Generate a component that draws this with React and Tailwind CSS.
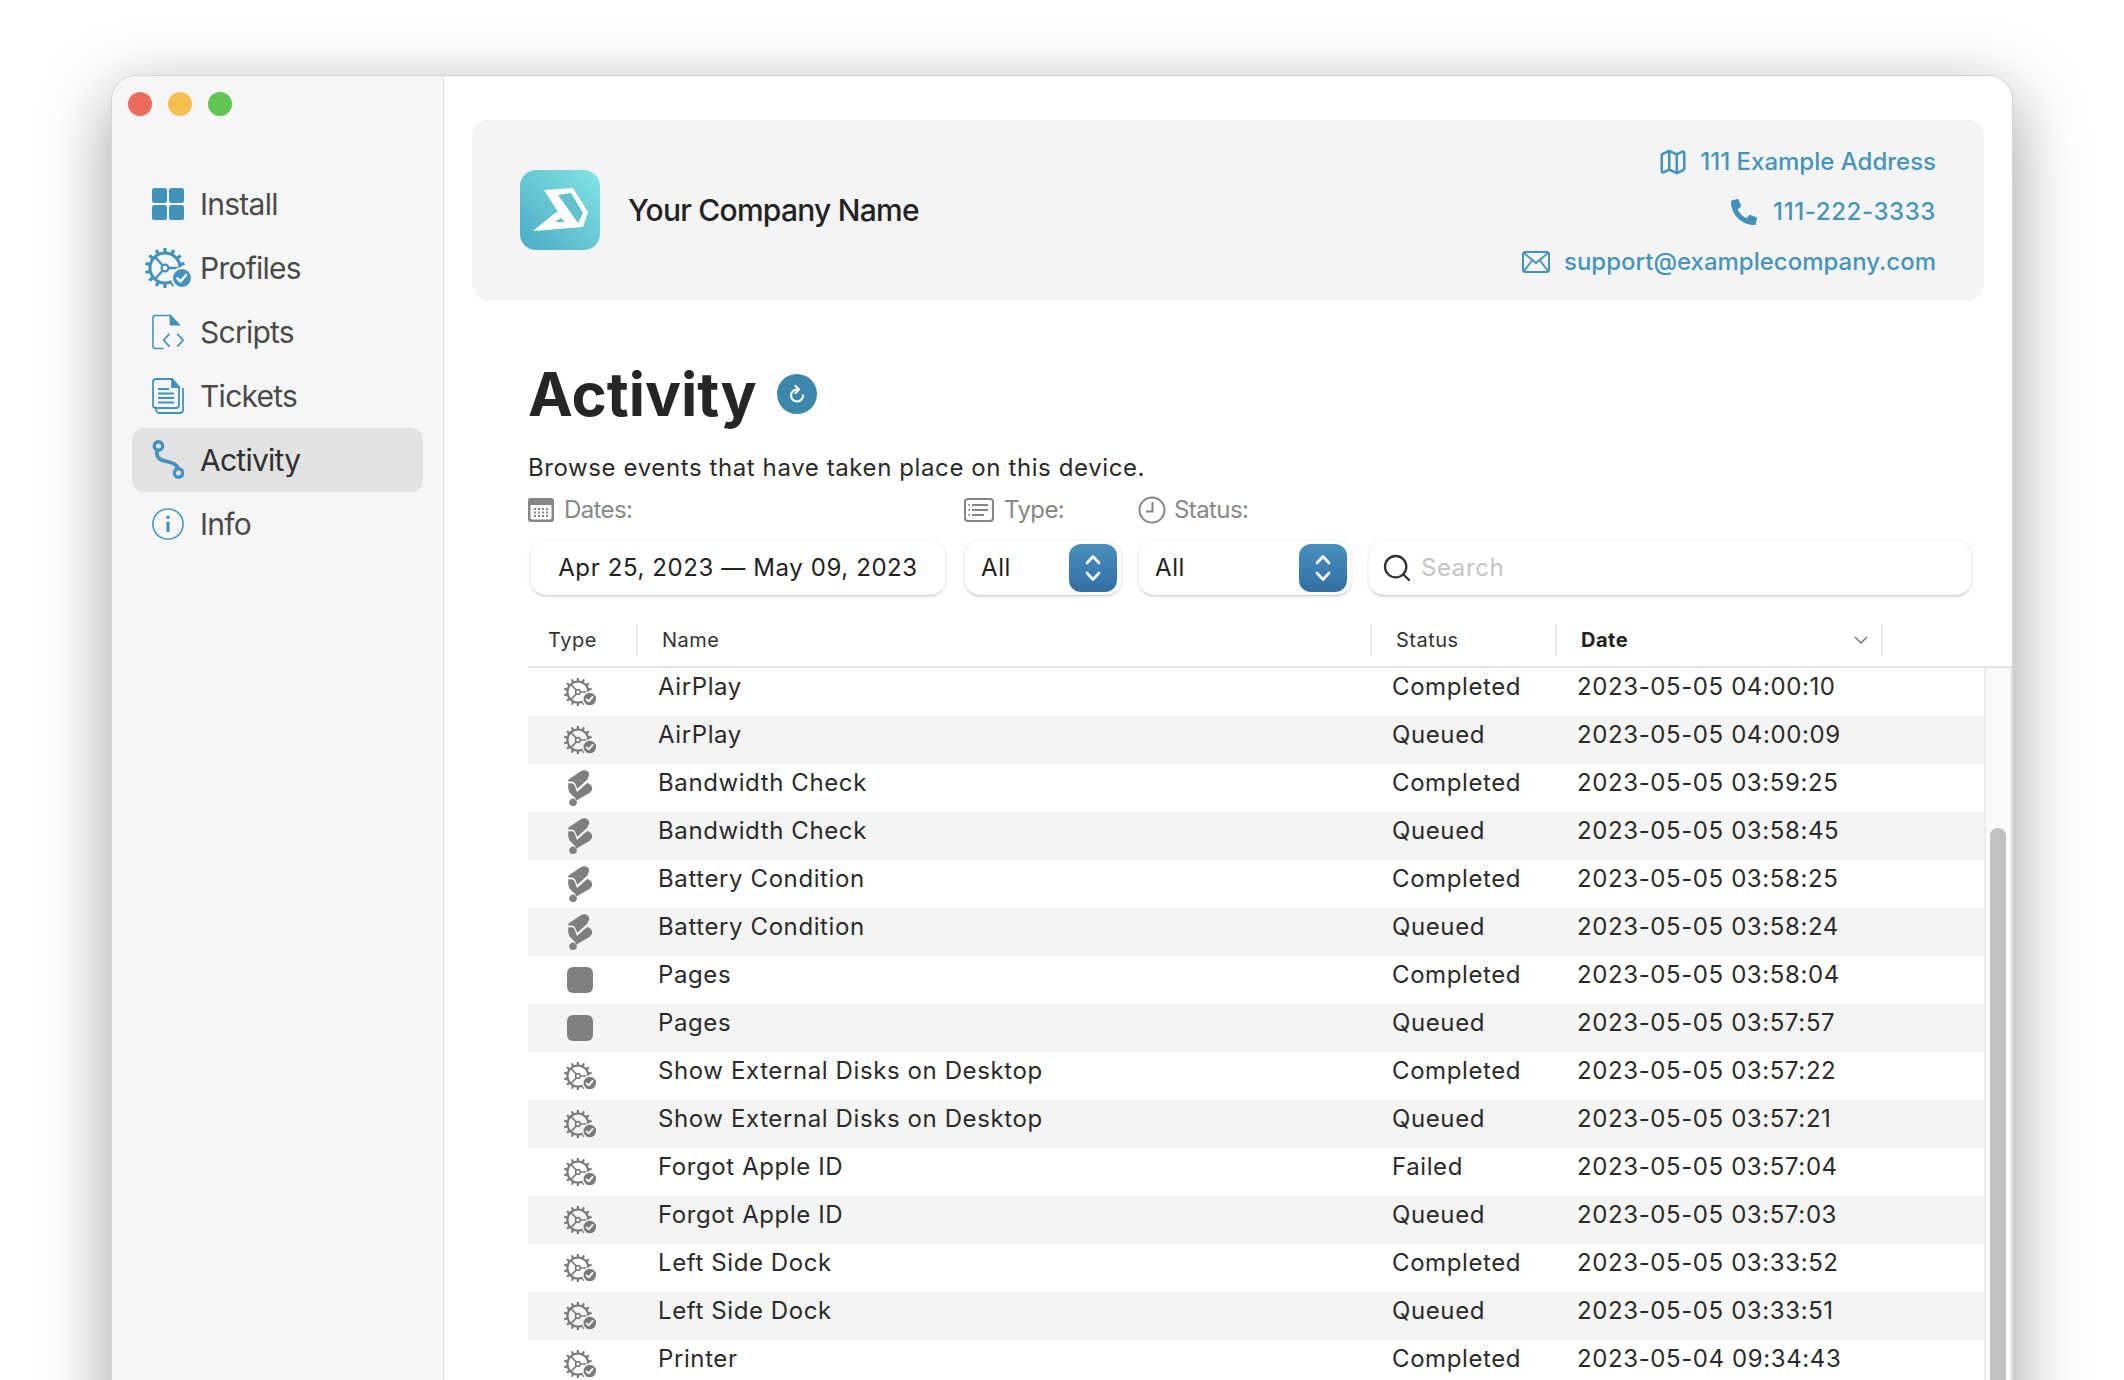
import React from "react";
import { Map, Search } from "lucide-react";
import { FaPhoneAlt } from "react-icons/fa";

const accent = "#4392bb";

const rows = [
  ["gear", "AirPlay", "Completed", "2023-05-05 04:00:10"],
  ["gear", "AirPlay", "Queued", "2023-05-05 04:00:09"],
  ["band", "Bandwidth Check", "Completed", "2023-05-05 03:59:25"],
  ["band", "Bandwidth Check", "Queued", "2023-05-05 03:58:45"],
  ["band", "Battery Condition", "Completed", "2023-05-05 03:58:25"],
  ["band", "Battery Condition", "Queued", "2023-05-05 03:58:24"],
  ["app", "Pages", "Completed", "2023-05-05 03:58:04"],
  ["app", "Pages", "Queued", "2023-05-05 03:57:57"],
  ["gear", "Show External Disks on Desktop", "Completed", "2023-05-05 03:57:22"],
  ["gear", "Show External Disks on Desktop", "Queued", "2023-05-05 03:57:21"],
  ["gear", "Forgot Apple ID", "Failed", "2023-05-05 03:57:04"],
  ["gear", "Forgot Apple ID", "Queued", "2023-05-05 03:57:03"],
  ["gear", "Left Side Dock", "Completed", "2023-05-05 03:33:52"],
  ["gear", "Left Side Dock", "Queued", "2023-05-05 03:33:51"],
  ["gear", "Printer", "Completed", "2023-05-04 09:34:43"],
];

function GearIcon({ color, halo, className }) {
  const teeth = Array.from({ length: 14 }, (_, i) => (i * 360) / 14);
  return (
    <svg viewBox="0 0 48 40" className={className}>
      {teeth.map((deg) => (
        <rect key={deg} x="19.4" y="0" width="3.2" height="5" fill={color} transform={`rotate(${deg} 21 20)`} />
      ))}
      <circle cx="21" cy="20" r="15" fill="none" stroke={color} strokeWidth="3" />
      <path d="M21 20L11 9M21 20L11 31M21 20L36 20" stroke={color} strokeWidth="2.4" />
      <circle cx="21" cy="20" r="3.4" fill={halo} stroke={color} strokeWidth="2.2" />
      <circle cx="38" cy="30" r="10" fill={color} stroke={halo} strokeWidth="2" />
      <path d="M33.5 30.5l3 3 5.5-6.5" fill="none" stroke={halo} strokeWidth="2.6" strokeLinecap="round" strokeLinejoin="round" />
    </svg>
  );
}

function BandIcon() {
  return (
    <svg viewBox="0 0 26 37" className="w-6.5 h-9" fill="#7f7f7f">
      <path d="M13.500 1.500Q17-.5 20.500 1Q23.500 3.500 22 6.500L20.300 10L10.300 19.300L7.700 13.500Q7 11.700 4.500 11.700L1 11.700Q.5 10.500 1.500 9.500Z" />
      <path d="M1 13.500H4.500Q6.800 13.500 7.500 16L10 22.500L20.300 13.300Q24 14 25.500 18Q26 21 23.500 23L9 31.500Q8 28 5 26L2 22.500Q.2 18 1 13.500Z" />
      <path d="M5.800 29Q9.800 31 9.800 33A4 4 0 1 1 1.800 33Q2 30.500 5.800 29Z" />
    </svg>
  );
}

function TypeIcon({ type, halo }) {
  if (type === "gear") return <GearIcon color="#7a7a7a" halo={halo} className="w-8.5 h-7" />;
  if (type === "band") return <BandIcon />;
  return <div className="w-6.5 h-6.5 rounded-md bg-[#808080]" />;
}

function Logo() {
  return (
    <div className="w-20 h-20 rounded-2xl bg-linear-to-tr from-[#4aabc4] to-[#84e4e4] shrink-0">
      <svg viewBox="0 0 80 80" className="w-20 h-20">
        <path d="M24 20L53 18L68 42L63 57L13 61L35 43L38 42Z" fill="#fff" />
        <path d="M38 25L51 23L63 43L58 53Z" fill="#62c1d0" />
        <path d="M35 52L41 48L45 52Z" fill="#5dbccd" />
      </svg>
    </div>
  );
}

function InstallIcon() {
  return (
    <svg viewBox="0 0 32 32" className="w-8 h-8" fill={accent}>
      <rect x="0" y="0" width="15" height="15" rx="2.500" />
      <rect x="17" y="0" width="15" height="15" rx="2.500" />
      <rect x="0" y="17" width="15" height="15" rx="2.500" />
      <rect x="17" y="17" width="15" height="15" rx="2.500" />
    </svg>
  );
}

function ScriptsIcon() {
  return (
    <svg viewBox="0 0 33 36" className="w-8 h-9" fill="none" stroke={accent} strokeWidth="1.600">
      <path d="M19 1H3.500Q1 1 1 3.500V32.500Q1 35 3.500 35H12" />
      <path d="M19 1L28 10.500H19Z" fill={accent} />
      <path d="M18 20L12 26.500L18 33M26 20L32 26.500L26 33" strokeWidth="1.800" />
    </svg>
  );
}

function TicketsIcon() {
  return (
    <svg viewBox="0 0 32 36" className="w-8 h-9" fill="none" stroke={accent} strokeWidth="1.800">
      <path d="M20 1H4Q1 1 1 4V27Q1 30 4 30H24Q27 30 27 27V9Z" />
      <path d="M20 1L27 9H20Z" fill={accent} />
      <path d="M6 11H17M6 15.500H22M6 20H22M6 24.500H22" />
      <path d="M31 10V32Q31 35 28 35H7Q4.500 35 4 31" />
    </svg>
  );
}

function ActivityIcon() {
  return (
    <svg viewBox="0 0 32 40" className="w-8 h-10" fill="none" stroke={accent} strokeWidth="3.400">
      <circle cx="6.500" cy="6" r="4.200" />
      <circle cx="26.500" cy="33" r="4.200" />
      <path d="M5 11C4 20 10 20 17 22C23 24 25 25 25.500 28" strokeWidth="3.800" strokeLinecap="round" />
    </svg>
  );
}

function InfoIcon() {
  return (
    <svg viewBox="0 0 36 36" className="w-9 h-9" fill="none" stroke={accent} strokeWidth="1.700">
      <circle cx="18" cy="18" r="17" />
      <circle cx="18" cy="10.500" r="2" fill={accent} stroke="none" />
      <path d="M18 15.500V27" strokeWidth="3.600" />
    </svg>
  );
}

function MailIcon() {
  return (
    <svg viewBox="0 0 28 22" className="w-7 h-5.5" fill="none" stroke={accent} strokeWidth="2">
      <rect x="1" y="1" width="26" height="20" rx="2.500" />
      <path d="M2 2L14 12L26 2M2 20L10.500 9M26 20L17.500 9" strokeWidth="1.800" />
    </svg>
  );
}

function CalendarIcon() {
  return (
    <svg viewBox="0 0 26 24" className="w-6.5 h-6" fill="#858585">
      <path fillRule="evenodd" d="M3 0H23Q26 0 26 3V21Q26 24 23 24H3Q0 24 0 21V3Q0 0 3 0ZM2.500 7V20Q2.500 21.500 4 21.500H22Q23.500 21.500 23.500 20V7Z" />
      {[6, 10, 14, 18].map((x) =>
        [10, 13.5, 17].map((y) => <rect key={`${x}-${y}`} x={x} y={y} width="2" height="2" />)
      )}
    </svg>
  );
}

function ListIcon() {
  return (
    <svg viewBox="0 0 30 24" className="w-7.5 h-6" fill="none" stroke="#858585" strokeWidth="2">
      <rect x="1" y="1" width="28" height="22" rx="3" />
      <path d="M8 7H24M8 12H24M8 17H20" strokeWidth="1.800" />
      <path d="M4.500 7H6M4.500 12H6M4.500 17H6" strokeWidth="1.800" />
    </svg>
  );
}

function ClockIcon() {
  return (
    <svg viewBox="0 0 28 28" className="w-7 h-7" fill="none" stroke="#858585" strokeWidth="2">
      <circle cx="14" cy="14" r="12.500" />
      <path d="M14.500 6V15.500H8" />
    </svg>
  );
}

function RefreshIcon() {
  return (
    <svg viewBox="0 0 24 24" className="w-6 h-6" fill="none" stroke="#fff" strokeWidth="2.200" strokeLinecap="round" strokeLinejoin="round">
      <path d="M18 13.500a6 6 0 1 1-6-6" />
      <path d="M10.500 4L14 7.500L10.500 11" />
    </svg>
  );
}

function Stepper() {
  return (
    <div className="w-12 h-12 rounded-xl bg-linear-to-b from-[#4a8fbd] to-[#2f70a5] flex items-center justify-center">
      <svg viewBox="0 0 16 28" className="w-4 h-7" fill="none" stroke="#fff" strokeWidth="2.600" strokeLinecap="round" strokeLinejoin="round">
        <path d="M2 9L8 2.500L14 9M2 19L8 25.500L14 19" />
      </svg>
    </div>
  );
}

const navItems = [
  ["Install", <InstallIcon />],
  ["Profiles", <GearIcon color={accent} halo="#f6f6f6" className="w-12 h-10 shrink-0 -mx-2" />],
  ["Scripts", <ScriptsIcon />],
  ["Tickets", <TicketsIcon />],
  ["Activity", <ActivityIcon />],
  ["Info", <InfoIcon />],
];

const boxClass = "h-14 rounded-2xl bg-white border border-gray-100 border-b-gray-300 shadow-sm flex items-center text-2xl tracking-wide";

export default function App() {
  return (
    <div className="h-screen overflow-hidden bg-white px-28 pt-19 font-[Inter,sans-serif]">
      <div className="flex h-[1400px] rounded-t-3xl ring-1 ring-gray-300 bg-white overflow-hidden shadow-[0_20px_70px_rgba(0,0,0,0.4)]">
        <aside className="w-[332px] shrink-0 bg-[#f6f6f6] border-r border-[#e4e4e4] pt-4">
          <div className="flex gap-4 pl-4">
            <span className="w-6 h-6 rounded-full bg-[#ec6a5e]" />
            <span className="w-6 h-6 rounded-full bg-[#f4bf4f]" />
            <span className="w-6 h-6 rounded-full bg-[#61c554]" />
          </div>
          <nav className="mt-14 px-5">
            {navItems.map(([label, icon]) => (
              <div
                key={label}
                className={`h-16 flex items-center gap-4 pl-5 rounded-xl text-3xl tracking-tight ${label === "Activity" ? "bg-[#e2e2e2] text-[#2f2f2f]" : "text-[#4a4a4a]"}`}
              >
                <div className="w-8 flex justify-center">{icon}</div>
                <span>{label}</span>
              </div>
            ))}
          </nav>
        </aside>

        <main className="flex-1 min-w-0 flex flex-col pt-11">
          <div className="mx-7 h-45 rounded-2xl bg-[#f4f4f4] flex items-center justify-between px-12">
            <div className="flex items-center gap-7">
              <Logo />
              <span className="text-3xl font-medium tracking-tight text-[#222]">Your Company Name</span>
            </div>
            <div className="flex flex-col items-end gap-0.5 mt-1 text-2xl font-medium text-[#4595ba]">
              <div className="h-12 flex items-center gap-3">
                <Map size={30} strokeWidth={2} color={accent} />
                <span>111 Example Address</span>
              </div>
              <div className="h-12 flex items-center gap-4">
                <FaPhoneAlt size={26} color={accent} />
                <span className="tracking-wide">111-222-3333</span>
              </div>
              <div className="h-12 flex items-center gap-3.5">
                <MailIcon />
                <span>support@examplecompany.com</span>
              </div>
            </div>
          </div>

          <div className="pl-[84px] flex-1 flex flex-col min-h-0">
            <div className="mt-16 flex items-center gap-5 pr-10">
              <h1 className="text-6xl font-bold text-[#262626]">Activity</h1>
              <div className="w-10 h-10 rounded-full bg-[#3d87ad] flex items-center justify-center">
                <RefreshIcon />
              </div>
            </div>
            <p className="mt-7 text-2xl tracking-wide text-[#2a2a2a]">Browse events that have taken place on this device.</p>

            <div className="mt-2.5 pr-10 grid grid-cols-[420px_158px_214px_1fr] gap-x-4 gap-y-3.5 items-center">
              <div className="flex items-center gap-2.5 text-2xl tracking-tight text-[#888]"><CalendarIcon />Dates:</div>
              <div className="flex items-center gap-2.5 text-2xl tracking-tight text-[#888]"><ListIcon />Type:</div>
              <div className="flex items-center gap-2 text-2xl tracking-tight text-[#888]"><ClockIcon />Status:</div>
              <div />

              <div className={`${boxClass} mx-0.5 justify-center text-[#222]`}>Apr 25, 2023 — May 09, 2023</div>
              <div className={`${boxClass} justify-between pl-4 pr-1 text-[#222]`}>
                <span>All</span>
                <Stepper />
              </div>
              <div className={`${boxClass} justify-between pl-4 pr-1 text-[#222]`}>
                <span>All</span>
                <Stepper />
              </div>
              <div className={`${boxClass} gap-2 px-3 text-[#c4c4c4]`}>
                <Search size={32} strokeWidth={1.75} color="#333" />
                <span>Search</span>
              </div>
            </div>

            <div className="mt-7 h-8 grid grid-cols-[108px_734px_185px_328px] items-center text-xl tracking-wide text-[#333]">
              <div className="pl-5">Type</div>
              <div className="pl-6 h-8 flex items-center border-l-2 border-[#e8e8e8]">Name</div>
              <div className="pl-6 h-8 flex items-center border-l-2 border-[#e8e8e8]">Status</div>
              <div className="pl-6 pr-3 h-8 flex items-center justify-between border-x-2 border-[#e8e8e8] font-bold text-[#222]">
                Date
                <svg viewBox="0 0 16 10" className="w-4 h-2.5" fill="none" stroke="#777" strokeWidth="1.500">
                  <path d="M2 2L8 8L14 2" />
                </svg>
              </div>
            </div>
            <div className="mt-2.5 h-0.5 bg-[#e4e4e4]" />

            <div className="flex-1 flex min-h-0">
              <div className="flex-1 min-w-0">
                {rows.map(([type, name, status, date], i) => (
                  <div
                    key={i}
                    className={`h-12 grid grid-cols-[110px_734px_185px_1fr] items-center text-2xl tracking-wide text-[#2a2a2a] ${i % 2 ? "bg-[#f4f4f4]" : "bg-white"}`}
                  >
                    <div className="flex justify-center pr-1.5">
                      <TypeIcon type={type} halo={i % 2 ? "#f4f4f4" : "#fff"} />
                    </div>
                    <div className="pl-5 pb-2.5">{name}</div>
                    <div className="pl-5 pb-2.5">{status}</div>
                    <div className="pl-5 pb-2.5">{date}</div>
                  </div>
                ))}
              </div>
              <div className="w-7 shrink-0 bg-[#fafafa] border-x-2 border-[#ececec] flex flex-col items-center pt-40">
                <div className="w-4 flex-1 rounded-t-full bg-[#c1c1c1]" />
              </div>
            </div>
          </div>
        </main>
      </div>
    </div>
  );
}
